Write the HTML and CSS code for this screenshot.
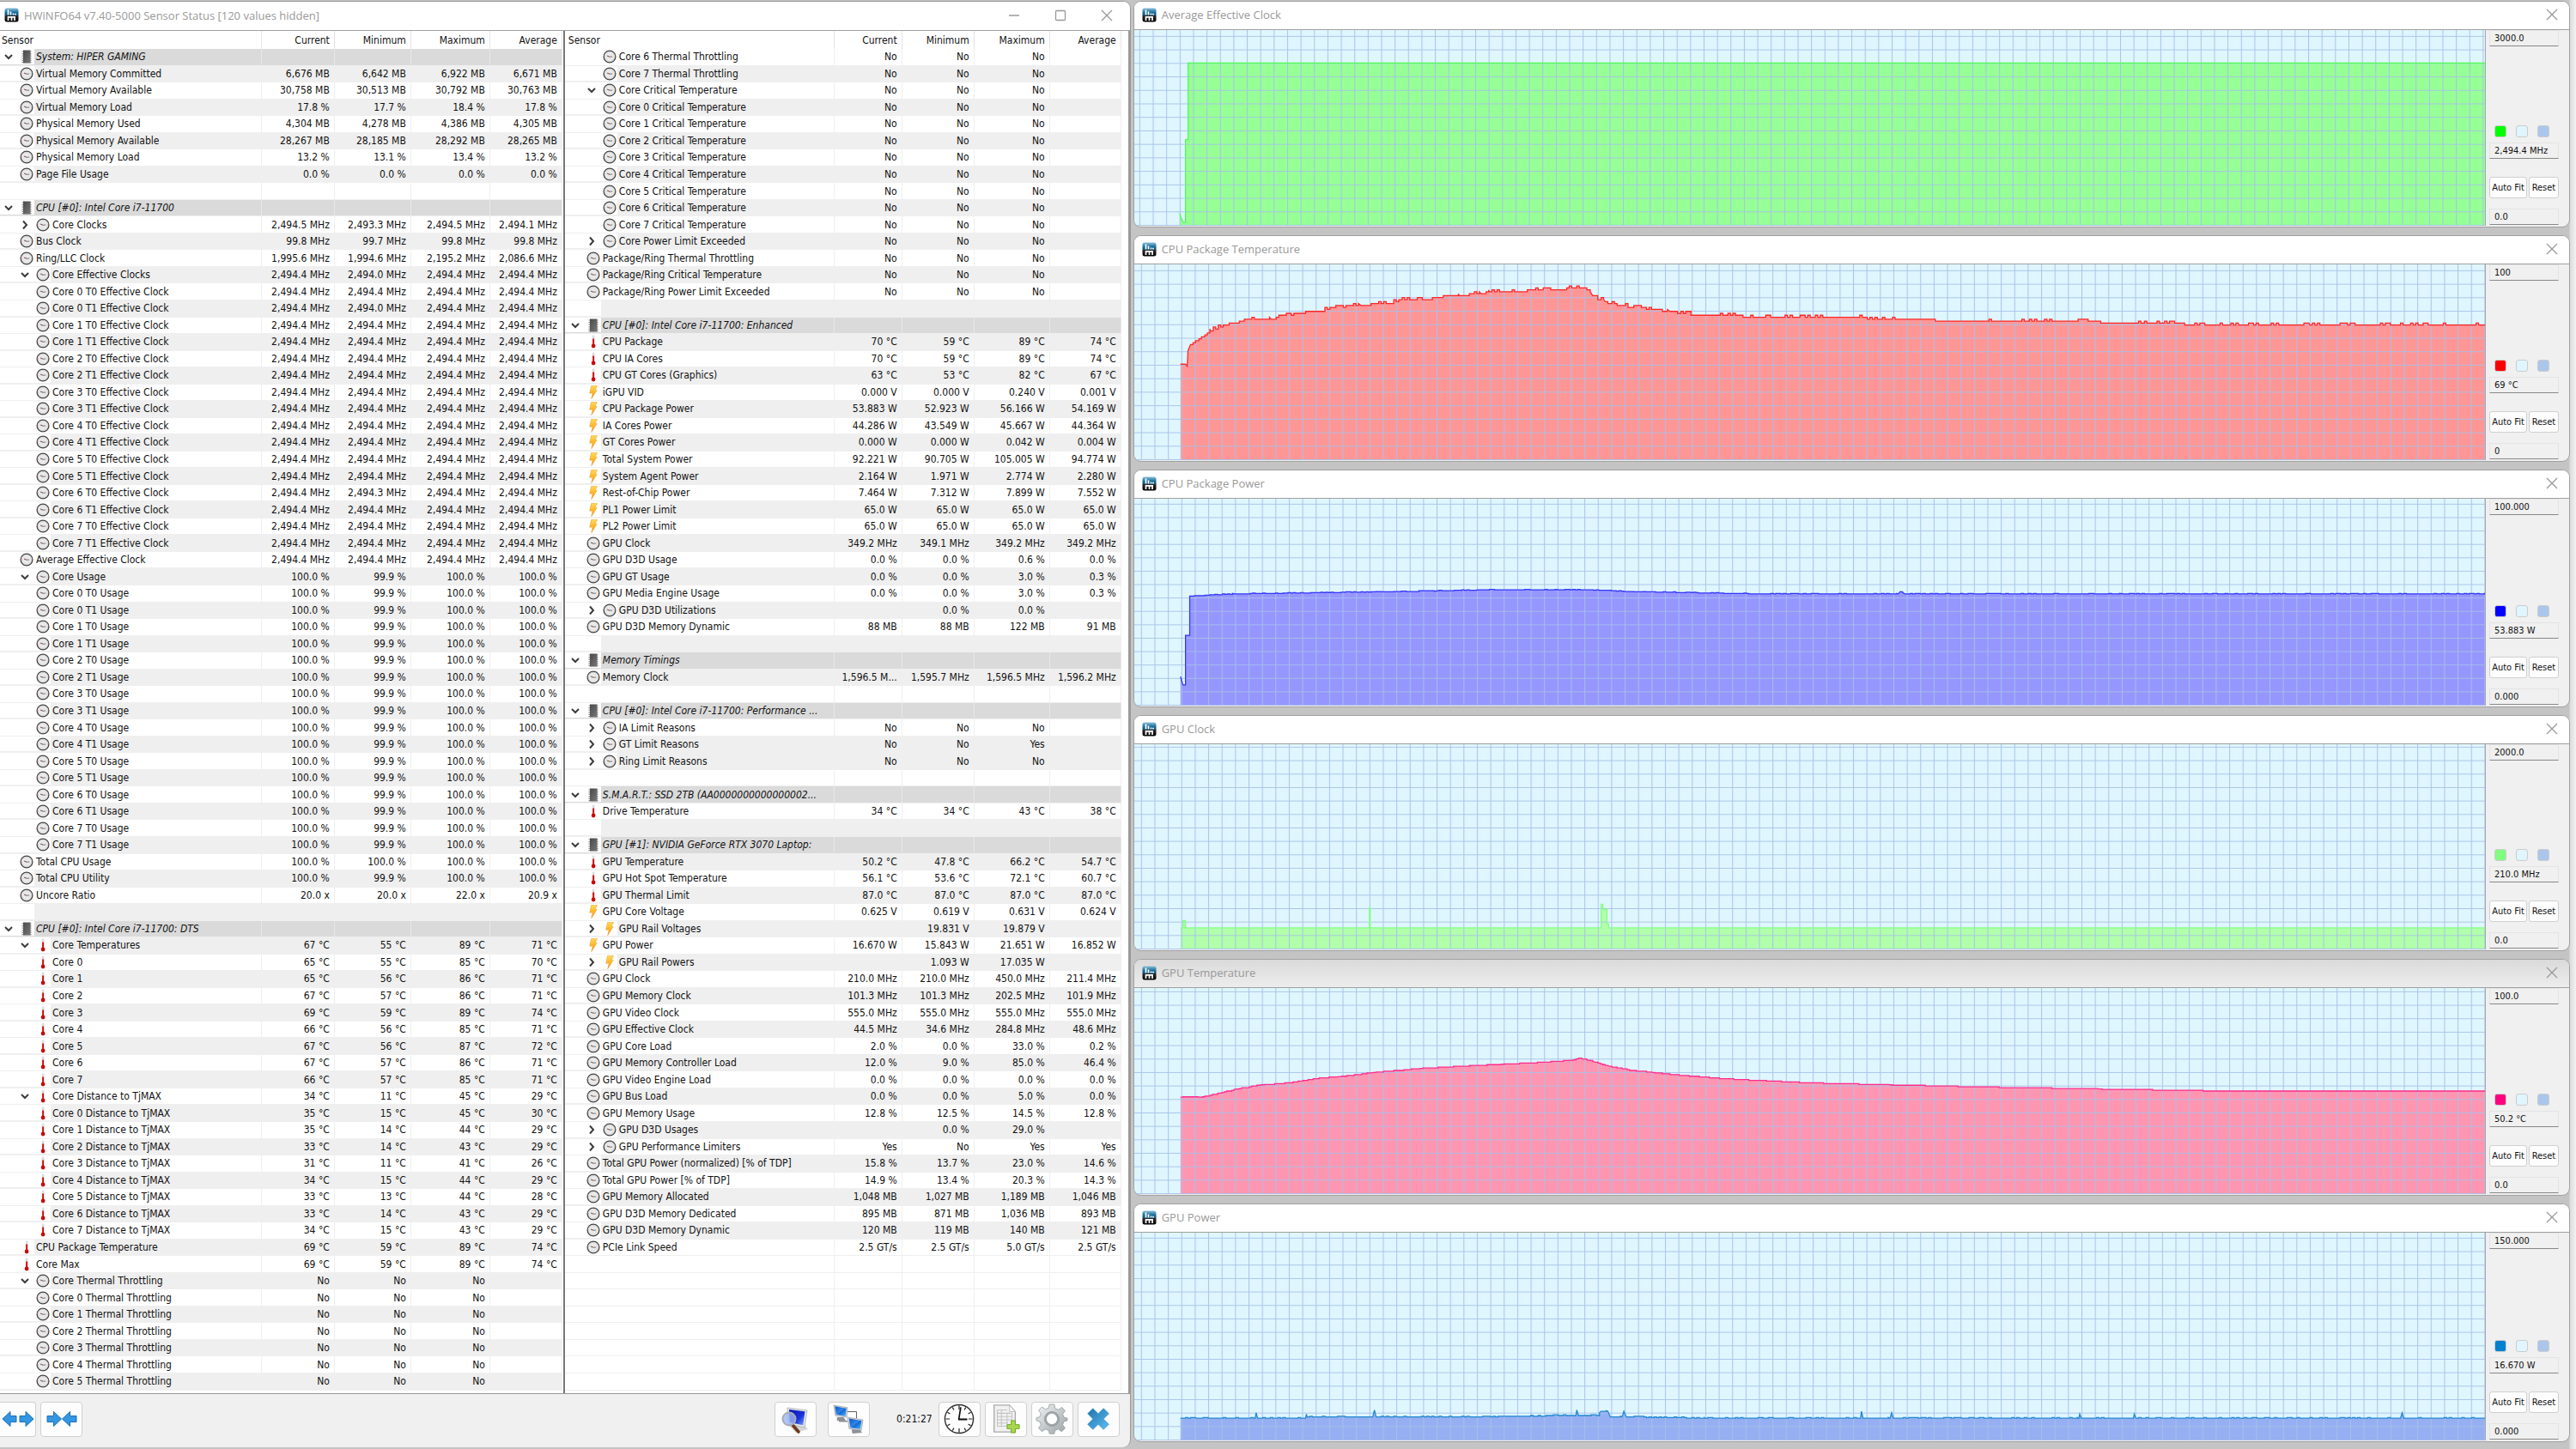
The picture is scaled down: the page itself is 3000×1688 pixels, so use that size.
FILE: index.html
```html
<!DOCTYPE html>
<html lang="en">
<head>
<meta charset="utf-8">
<title>HWiNFO64 Sensor Status</title>
<link rel="stylesheet" href="styles.css">
</head>

<body>
<!-- icons -->
<svg class="defs" width="0" height="0" aria-hidden="true">
	<defs>
		<linearGradient id="gLogo" x1="0" y1="0" x2="0" y2="1"><stop offset="0" stop-color="#8cc0da"/><stop offset=".3" stop-color="#1c6f9c"/><stop offset=".52" stop-color="#0f5077"/><stop offset=".53" stop-color="#2a2a2a"/><stop offset="1" stop-color="#000"/></linearGradient>
		<linearGradient id="gBolt" x1="0" y1="0" x2="0" y2="1"><stop offset="0" stop-color="#ffdc5a"/><stop offset=".6" stop-color="#ffb020"/><stop offset="1" stop-color="#f08020"/></linearGradient>
		<linearGradient id="gChip" x1="0" y1="0" x2="1" y2="1"><stop offset="0" stop-color="#4a4a4a"/><stop offset="1" stop-color="#777"/></linearGradient>
		<linearGradient id="gBlue" x1="0" y1="0" x2="1" y2="1"><stop offset="0" stop-color="#1550c8"/><stop offset=".5" stop-color="#2a8be8"/><stop offset=".55" stop-color="#1565d0"/><stop offset="1" stop-color="#4ab8ff"/></linearGradient>
		<linearGradient id="gDeep" x1="0" y1="0" x2="1" y2="1"><stop offset="0" stop-color="#0a12b0"/><stop offset=".6" stop-color="#1a34dc"/><stop offset="1" stop-color="#7fa6f8"/></linearGradient>
		<linearGradient id="gX" x1="0" y1="0" x2="1" y2="1"><stop offset="0" stop-color="#1f6fa8"/><stop offset="1" stop-color="#5cc0f5"/></linearGradient>
		<linearGradient id="gGear" x1="0" y1="0" x2="1" y2="1"><stop offset="0" stop-color="#f2f4f4"/><stop offset="1" stop-color="#9aa2a4"/></linearGradient>
	</defs>
	<symbol id="logo" viewBox="0 0 17 17">
		<rect x=".5" y=".5" width="16" height="16" rx="2.5" fill="url(#gLogo)"/>
		<path d="M4.5 2.5v6M7.5 4.5v4M10.5 6.5v2M13 6.8v1.7M4.5 10v5M8.5 10v5M12 10v5M4 10.8h9" stroke="#fff" stroke-width="1.7" fill="none"/>
	</symbol>
	<symbol id="gauge" viewBox="0 0 16 16">
		<circle cx="8" cy="8" r="6.9" fill="#e9e9e9" stroke="#454545" stroke-width="1.3"/>
		<circle cx="8" cy="8" r="5.6" fill="none" stroke="#cfcfcf" stroke-width=".8"/>
		<path d="M5 7l3.2 1.3" stroke="#8a5a50" stroke-width="1.2"/><path d="M8.2 8.3l3-.3" stroke="#777" stroke-width="1"/>
	</symbol>
	<symbol id="chip" viewBox="0 0 16 16">
		<path d="M2.5 2h11M2.5 4.6h11M2.5 7.2h11M2.5 9.8h11M2.5 12.4h11M2.5 14.6h11" stroke="#888" stroke-width="1.2"/>
		<rect x="4" y=".5" width="8.500" height="15" fill="url(#gChip)"/>
	</symbol>
	<symbol id="temp" viewBox="0 0 16 16">
		<rect x="6.700" y=".5" width="2.800" height="11" rx="1.400" fill="#dcdcdc"/>
		<path d="M8.100 4.500v8" stroke="#d00d0d" stroke-width="1.900"/>
		<circle cx="8.100" cy="13" r="2.400" fill="#cc0808"/>
	</symbol>
	<symbol id="bolt" viewBox="0 0 16 16">
		<path d="M5.500.5l7-.3-2.300 5 2 .3-6.500 10.300 1.500-6.800-3.500.2z" fill="url(#gBolt)" stroke="#e39a2a" stroke-width=".5"/>
	</symbol>
	<symbol id="open" viewBox="0 0 12 12"><path d="M2 4l4 4 4-4" fill="none" stroke="#3c3c3c" stroke-width="2"/></symbol>
	<symbol id="shut" viewBox="0 0 12 12"><path d="M4 1.500l4 4.500-4 4.500" fill="none" stroke="#3c3c3c" stroke-width="2"/></symbol>
	<symbol id="close" viewBox="0 0 14 14"><path d="M1 1l12 12M13 1L1 13" stroke="#999" stroke-width="1.300" fill="none"/></symbol>
	<symbol id="wide" viewBox="0 0 38 20">
		<path d="M1 10l9-8.500v5h7v7h-7v5z" fill="#3496e0" stroke="#1a6fb8"/><path d="M37 10l-9-8.500v5h-7v7h7v5z" fill="#3496e0" stroke="#1a6fb8"/>
	</symbol>
	<symbol id="narrow" viewBox="0 0 38 20">
		<path d="M18.500 10l-9-8.500v5h-7.500v7h7.500v5z" fill="#3496e0" stroke="#1a6fb8"/><path d="M19.500 10l9-8.500v5h7.500v7h-7.500v5z" fill="#3496e0" stroke="#1a6fb8"/>
	</symbol>
	<symbol id="search" viewBox="0 0 36 36">
		<path d="M10 25l18-1 5 6-14 4z" fill="#d3d6da"/>
		<path d="M9 5l23 3-3 20-19-4z" fill="#e4e6ea" stroke="#a7abb3" stroke-width=".8"/>
		<path d="M11 7l18.500 2.300-2.300 16-15.700-3.300z" fill="url(#gDeep)"/>
		<path d="M15 25l7 8" stroke="#6e3a14" stroke-width="3.600" stroke-linecap="round"/>
		<circle cx="11" cy="18" r="7.500" fill="#9fb8f2" fill-opacity=".8" stroke="#a8adb8" stroke-width="2"/>
	</symbol>
	<symbol id="net" viewBox="0 0 38 38">
		<path d="M18 10h11v8M18 22H8v-5" fill="none" stroke="#555" stroke-width="1"/>
		<path d="M5 17l8 0 3 4-11 0z" fill="#8d9298"/><path d="M1 2l17 3-1 12-14-2z" fill="#cfd4d9" stroke="#8b9096" stroke-width=".6"/><path d="M2.500 3.500l14 2.500-1 9.500-11.500-2z" fill="url(#gBlue)"/>
		<path d="M23 32l10 0 3 4-12 1z" fill="#8d9298"/><path d="M18 17l19 3-2 13-15-2z" fill="#cfd4d9" stroke="#8b9096" stroke-width=".6"/><path d="M20 18.600l15.300 2.400-1.700 10.300-12.200-1.800z" fill="url(#gBlue)"/>
	</symbol>
	<symbol id="clock" viewBox="0 0 38 38">
		<circle cx="19" cy="19" r="17.500" fill="#fff" stroke="#333" stroke-width="1.500"/>
		<path d="M19 2.500v5M19 30.500v5M2.500 19h5M30.500 19h5M10.800 4.700l1.800 3.100M25.400 30.200l1.800 3.100M4.700 10.800l3.100 1.800M30.200 25.400l3.100 1.800M4.700 27.200l3.100-1.800M30.200 12.600l3.100-1.800M10.800 33.300l1.800-3.100M25.400 7.800l1.800-3.100" stroke="#222" stroke-width="1.300"/>
		<path d="M18.500 20L21 4.500" stroke="#111" stroke-width="1.800"/><path d="M18 19.500h11" stroke="#111" stroke-width="2.200"/>
	</symbol>
	<symbol id="sheet" viewBox="0 0 36 38">
		<path d="M4 2h19l7 8v25H4z" fill="#f1f1f1" stroke="#aaa" stroke-width="1.400"/><path d="M23 2v8h7z" fill="#fff" stroke="#bbb"/>
		<path d="M8 8h12M8 12h18M8 16h18M8 20h18M8 24h13M8 28h13M8 8v20M13 8v20M20 12v16M26 12v8" stroke="#c4c4c4" stroke-width="1.100" fill="none"/>
		<path d="M25 21h5v5h5v5h-5v5h-5v-5h-5v-5h5z" fill="#a9d84f" stroke="#6da424"/>
	</symbol>
	<symbol id="gear" viewBox="0 0 38 38">
		<g fill="url(#gGear)" stroke="#90989a" stroke-width=".8">
			<path d="M16 1h6l1 5 4 1.700 4.300-3 4 4.200-3 4.200 1.700 4 4 .9v3l-4 1-1.700 4 3 4.300-4.200 4.200-4.200-3-4 1.700-1 4h-5.800l-1-4-4-1.700-4.300 3-4.200-4.200 3-4.300-1.700-4L0 21v-3.500l4-.9 1.700-4-3-4.200 4.200-4.200 4.200 3 4-1.700z"/>
			<circle cx="19" cy="19" r="9" fill="#9fa6a8"/>
		</g>
		<circle cx="19" cy="19" r="6.500" fill="#fff"/>
	</symbol>
	<symbol id="cross" viewBox="0 0 38 38"><path d="M6 12.500L12.500 6 19 12.500 25.500 6 32 12.500 25.500 19 32 25.500 25.500 32 19 25.500 12.500 32 6 25.500 12.500 19z" fill="url(#gX)" stroke="#3d94ca" stroke-width=".8"/></symbol>
</svg>

<div class="desktop">
	<main class="win sensors">
		<header class="title">
			<svg class="logo"><use href="#logo"/></svg>
			<h1>HWiNFO64 v7.40-5000 Sensor Status [120 values hidden]</h1>
			<button class="sys" aria-label="Minimize"><svg viewBox="0 0 14 14"><path d="M1 7h12" stroke="#999" stroke-width="1.300"/></svg></button>
			<button class="sys" aria-label="Maximize"><svg viewBox="0 0 14 14"><rect x="1.500" y="1.500" width="11" height="11" rx="1" fill="none" stroke="#999" stroke-width="1.300"/></svg></button>
			<button class="sys" aria-label="Close"><svg><use href="#close"/></svg></button>
		</header>
		<div class="panes">
			<div class="pane first"><table id="left"></table></div>
			<div class="pane second"><table id="right"></table></div>
		</div>
		<footer class="bar">
			<button class="tool half" aria-label="Expand columns"><svg><use href="#wide"/></svg></button>
			<button class="tool" aria-label="Shrink columns"><svg><use href="#narrow"/></svg></button>
			<span class="space"></span>
			<button class="tool far" aria-label="Summary"><svg><use href="#search"/></svg></button>
			<button class="tool" aria-label="Remote"><svg><use href="#net"/></svg></button>
			<span class="uptime">0:21:27</span>
			<button class="tool" aria-label="Reset clock"><svg><use href="#clock"/></svg></button>
			<button class="tool" aria-label="Log to file"><svg><use href="#sheet"/></svg></button>
			<button class="tool" aria-label="Settings"><svg><use href="#gear"/></svg></button>
			<button class="tool" aria-label="Close sensors"><svg><use href="#cross"/></svg></button>
		</footer>
	</main>
	<div class="graphs" id="graphs"></div>
</div>

<script src="sensors.js"></script>
</body>
</html>
```
FILE: styles.css
```css
* { box-sizing: border-box; }
body { margin: 0; background: #c4c4c4; font: 12px "DejaVu Sans Condensed", "DejaVu Sans", sans-serif; color: #111; }
button, input { font: inherit; color: inherit; margin: 0; padding: 0; }
.defs { position: absolute; }

.desktop { display: grid; grid-template-columns: 659fr 841fr; gap: 3px; height: 100vh; min-height: 1600px; background: linear-gradient(to left, #f2f2f2, #dcdcdc 7px, #c4c4c4 8px); }
.win { display: flex; flex-direction: column; min-width: 0; min-height: 0; overflow: hidden; background: #f0f0f0; }
.title { flex: none; display: flex; align-items: center; height: 34px; padding-bottom: 2px; background: #fff; border-bottom: 1px solid #a0a0a0; }
.title h1, .title h2 { flex: 1; margin: 0; font: 13px "Open Sans", sans-serif; color: #999; white-space: nowrap; }
.logo { width: 17px; height: 17px; margin-right: 6px; }
.sys { width: 54px; height: 30px; border: 0; background: none; }
.sys svg { display: block; width: 14px; height: 14px; margin: auto; }

/* sensor window */
.sensors { margin: 1px 0 2px; border: solid #999; border-width: 1px 1px 0 0; border-radius: 0 9px 9px 0; }
.sensors .title { padding-left: 5px; }
.panes { flex: 1; display: flex; min-height: 0; background: #fff; border: solid #999; border-width: 0 2px 1px 0; }
.pane { flex: 1; min-width: 0; }
.second { border-left: 2px solid #777; }
table { width: 100%; height: calc(100% - 3px); border-spacing: 0; table-layout: fixed; }
thead tr { height: 21px; }
th { font-weight: normal; padding: 0 5px; text-align: right; border-right: 1px solid #e5e5e5; }
th:first-child { text-align: left; padding-left: 2px; }
.second th:first-child { padding-left: 4px; }
.current { width: 85px; }
.min { width: 89px; }
.max { width: 92px; }
.avg { width: 84px; }
.rest { width: 1px; padding: 0; border: 0; }
.second .current { width: 79px; }
.second .min { width: 84px; }
.second .max { width: 88px; }
.second .avg { width: 83px; }
.second .rest { width: 8px; }
td { padding: 0 5px 0 0; line-height: 18px; text-align: right; white-space: nowrap; border: solid #efefef; border-width: 0 1px 1px 0; }
td.name { text-align: left; padding: 0; --tree: 40px; background: linear-gradient(#fff, #fff) 0 0 / var(--tree) calc(100% - 1px) no-repeat; }
.second td.name { --tree: 42px; }
td.deep { --tree: 59px; }
.second td.deep { --tree: 61px; }
td.name.deep { --tree: 59px; }
.second td.name.deep { --tree: 61px; }
td.rest { background: #fff; padding: 0; border-right: 0; }
.gray { background: #efefef; }
.gray td { border-color: #efefef; }
.group { background: #dadada; font-style: italic; }
.group td { border-right-color: #e8e8e8; }
.node { display: flex; align-items: center; height: 18px; }
.tree { flex: none; display: flex; justify-content: flex-end; align-items: center; width: var(--tree); height: 18px; padding-right: 1px; }
.tree .arrow { width: 12px; height: 12px; margin-right: 7px; }
.tree .icon { width: 16px; height: 16px; }
.label { padding-left: 2px; }

.bar { flex: none; display: flex; align-items: center; gap: 5px; height: 62px; padding: 0 12px 4px 0; }
.space { flex: 1; }
.uptime { width: 70px; padding-right: 2px; text-align: right; }
.tool { width: 49px; height: 41px; background: #fdfdfd; border: 1px solid #d0d0d0; border-radius: 4px; }
.tool svg { display: block; width: 38px; height: 36px; margin: auto; }
.half { width: 42px; border-left: 0; border-radius: 0 4px 4px 0; }
.far { margin-right: 8px; }

/* graph windows */
.graphs { display: grid; grid-template-rows: 264fr 264fr 277fr 275fr 276fr 278fr; gap: 9px; padding: 1px 7px 8px 0; min-height: 0; }
.graph { border: 1px solid #a0a0a0; border-radius: 9px; }
.graph .title { height: 33px; padding-left: 9px; }
.graph .sys { width: 40px; }
.hover .title { background: linear-gradient(#dadada, #ededed); }
.body { flex: 1; display: flex; min-height: 0; padding-bottom: 1px; }
.plot { flex: 1; min-width: 0; background: #dff6fe; border-right: 1px solid #a8a8a8; }
.plot svg { display: block; width: 100%; height: 100%; }
.side { flex: none; display: flex; flex-direction: column; width: 97px; padding: 0 12px 1px 4px; font-size: 11px; }
.side input { width: 100%; height: 19px; padding: 0 5px; border: 1px solid #e4e4e4; border-bottom-color: #888; background: #f0f0f0; }
.colors { display: flex; gap: 11px; margin: auto 0 6px 6px; }
.colors button { width: 14px; height: 14px; border: 1px solid #ccc; border-radius: 3px; }
.buttons { display: flex; gap: 2px; margin: 21px 0 12px; }
.buttons button { width: 45px; height: 25px; background: #fdfdfd; border: 1px solid #d0d0d0; border-radius: 3px; white-space: nowrap; }
.buttons .reset { width: 36px; }
.first-color { background: var(--c); }
.bg-color { background: #dff6fe; }
.grid-color { background: #abc6ea; }
```
FILE: sensors.js
```javascript
// row: flags | label | current | minimum | maximum | average
// flags: level (0 group, 1, 2), icon (c gauge, t temperature, b power), v open, > closed, = shifts the stripes
var left=[
	'0v|System: HIPER GAMING',
	'1c|Virtual Memory Committed|6,676 MB|6,642 MB|6,922 MB|6,671 MB',
	'1c|Virtual Memory Available|30,758 MB|30,513 MB|30,792 MB|30,763 MB',
	'1c|Virtual Memory Load|17.8 %|17.7 %|18.4 %|17.8 %',
	'1c|Physical Memory Used|4,304 MB|4,278 MB|4,386 MB|4,305 MB',
	'1c|Physical Memory Available|28,267 MB|28,185 MB|28,292 MB|28,265 MB',
	'1c|Physical Memory Load|13.2 %|13.1 %|13.4 %|13.2 %',
	'1c|Page File Usage|0.0 %|0.0 %|0.0 %|0.0 %',
	'',
	'0v|CPU [#0]: Intel Core i7-11700',
	'2c>|Core Clocks|2,494.5 MHz|2,493.3 MHz|2,494.5 MHz|2,494.1 MHz',
	'1c|Bus Clock|99.8 MHz|99.7 MHz|99.8 MHz|99.8 MHz',
	'1c|Ring/LLC Clock|1,995.6 MHz|1,994.6 MHz|2,195.2 MHz|2,086.6 MHz',
	'2cv|Core Effective Clocks|2,494.4 MHz|2,494.0 MHz|2,494.4 MHz|2,494.4 MHz'
];
var lows={1:'2,494.0', 12:'2,494.3'};
var i=0;
for(i=0;i<16;i++)
{
	left.push('2c|Core '+(i>>1)+' T'+i%2+' Effective Clock|2,494.4 MHz|'+(lows[i]||'2,494.4')+' MHz|2,494.4 MHz|2,494.4 MHz');
}
left.push('1c|Average Effective Clock|2,494.4 MHz|2,494.4 MHz|2,494.4 MHz|2,494.4 MHz');
left.push('2cv|Core Usage|100.0 %|99.9 %|100.0 %|100.0 %');
for(i=0;i<16;i++)
{
	left.push('2c|Core '+(i>>1)+' T'+i%2+' Usage|100.0 %|99.9 %|100.0 %|100.0 %');
}
left.push(
	'1c|Total CPU Usage|100.0 %|100.0 %|100.0 %|100.0 %',
	'1c|Total CPU Utility|100.0 %|99.9 %|100.0 %|100.0 %',
	'1c|Uncore Ratio|20.0 x|20.0 x|22.0 x|20.9 x',
	'',
	'0v|CPU [#0]: Intel Core i7-11700: DTS'
);
function celsius(flags,label,values)
{
	left.push(flags+'|'+label+'|'+values.split(' ').map(function(v){ return v+' °C'; }).join('|'));
}
celsius('2tv','Core Temperatures','67 55 89 71');
['65 55 85 70','65 56 86 71','67 57 86 71','69 59 89 74','66 56 85 71','67 56 87 72','67 57 86 71','66 57 85 71'].forEach(function(v,n){ celsius('2t','Core '+n,v); });
celsius('2tv','Core Distance to TjMAX','34 11 45 29');
['35 15 45 30','35 14 44 29','33 14 43 29','31 11 41 26','34 15 44 29','33 13 44 28','33 14 43 29','34 15 43 29'].forEach(function(v,n){ celsius('2t','Core '+n+' Distance to TjMAX',v); });
celsius('1t','CPU Package Temperature','69 59 89 74');
celsius('1t','Core Max','69 59 89 74');
left.push('2cv|Core Thermal Throttling|No|No|No');
for(i=0;i<6;i++)
{
	left.push('2c|Core '+i+' Thermal Throttling|No|No|No');
}

var right=[
	'2c|Core 6 Thermal Throttling|No|No|No',
	'2c|Core 7 Thermal Throttling|No|No|No',
	'2cv|Core Critical Temperature|No|No|No'
];
for(i=0;i<8;i++)
{
	right.push('2c|Core '+i+' Critical Temperature|No|No|No');
}
right.push(
	'2c>|Core Power Limit Exceeded|No|No|No',
	'1c|Package/Ring Thermal Throttling|No|No|No',
	'1c|Package/Ring Critical Temperature|No|No|No',
	'1c|Package/Ring Power Limit Exceeded|No|No|No',
	'',
	'0v|CPU [#0]: Intel Core i7-11700: Enhanced',
	'1t|CPU Package|70 °C|59 °C|89 °C|74 °C',
	'1t|CPU IA Cores|70 °C|59 °C|89 °C|74 °C',
	'1t|CPU GT Cores (Graphics)|63 °C|53 °C|82 °C|67 °C',
	'1b|iGPU VID|0.000 V|0.000 V|0.240 V|0.001 V',
	'1b|CPU Package Power|53.883 W|52.923 W|56.166 W|54.169 W',
	'1b|IA Cores Power|44.286 W|43.549 W|45.667 W|44.364 W',
	'1b|GT Cores Power|0.000 W|0.000 W|0.042 W|0.004 W',
	'1b|Total System Power|92.221 W|90.705 W|105.005 W|94.774 W',
	'1b|System Agent Power|2.164 W|1.971 W|2.774 W|2.280 W',
	'1b|Rest-of-Chip Power|7.464 W|7.312 W|7.899 W|7.552 W',
	'1b|PL1 Power Limit|65.0 W|65.0 W|65.0 W|65.0 W',
	'1b|PL2 Power Limit|65.0 W|65.0 W|65.0 W|65.0 W',
	'1c|GPU Clock|349.2 MHz|349.1 MHz|349.2 MHz|349.2 MHz',
	'1c|GPU D3D Usage|0.0 %|0.0 %|0.6 %|0.0 %',
	'1c|GPU GT Usage|0.0 %|0.0 %|3.0 %|0.3 %',
	'1c|GPU Media Engine Usage|0.0 %|0.0 %|3.0 %|0.3 %',
	'2c>|GPU D3D Utilizations||0.0 %|0.0 %',
	'1c|GPU D3D Memory Dynamic|88 MB|88 MB|122 MB|91 MB',
	'',
	'0v|Memory Timings',
	'1c|Memory Clock|1,596.5 M...|1,595.7 MHz|1,596.5 MHz|1,596.2 MHz',
	'',
	'0v|CPU [#0]: Intel Core i7-11700: Performance ...',
	'2c>|IA Limit Reasons|No|No|No',
	'2c>|GT Limit Reasons|No|No|Yes',
	'2c>=|Ring Limit Reasons|No|No|No',
	'',
	'0v|S.M.A.R.T.: SSD 2TB (AA0000000000000002...',
	'1t|Drive Temperature|34 °C|34 °C|43 °C|38 °C',
	'',
	'0v|GPU [#1]: NVIDIA GeForce RTX 3070 Laptop:',
	'1t|GPU Temperature|50.2 °C|47.8 °C|66.2 °C|54.7 °C',
	'1t|GPU Hot Spot Temperature|56.1 °C|53.6 °C|72.1 °C|60.7 °C',
	'1t|GPU Thermal Limit|87.0 °C|87.0 °C|87.0 °C|87.0 °C',
	'1b|GPU Core Voltage|0.625 V|0.619 V|0.631 V|0.624 V',
	'2b>|GPU Rail Voltages||19.831 V|19.879 V',
	'1b|GPU Power|16.670 W|15.843 W|21.651 W|16.852 W',
	'2b>|GPU Rail Powers||1.093 W|17.035 W',
	'1c|GPU Clock|210.0 MHz|210.0 MHz|450.0 MHz|211.4 MHz',
	'1c|GPU Memory Clock|101.3 MHz|101.3 MHz|202.5 MHz|101.9 MHz',
	'1c|GPU Video Clock|555.0 MHz|555.0 MHz|555.0 MHz|555.0 MHz',
	'1c|GPU Effective Clock|44.5 MHz|34.6 MHz|284.8 MHz|48.6 MHz',
	'1c|GPU Core Load|2.0 %|0.0 %|33.0 %|0.2 %',
	'1c|GPU Memory Controller Load|12.0 %|9.0 %|85.0 %|46.4 %',
	'1c|GPU Video Engine Load|0.0 %|0.0 %|0.0 %|0.0 %',
	'1c|GPU Bus Load|0.0 %|0.0 %|5.0 %|0.0 %',
	'1c|GPU Memory Usage|12.8 %|12.5 %|14.5 %|12.8 %',
	'2c>|GPU D3D Usages||0.0 %|29.0 %',
	'2c>|GPU Performance Limiters|Yes|No|Yes|Yes',
	'1c|Total GPU Power (normalized) [% of TDP]|15.8 %|13.7 %|23.0 %|14.6 %',
	'1c|Total GPU Power [% of TDP]|14.9 %|13.4 %|20.3 %|14.3 %',
	'1c|GPU Memory Allocated|1,048 MB|1,027 MB|1,189 MB|1,046 MB',
	'1c|GPU D3D Memory Dedicated|895 MB|871 MB|1,036 MB|893 MB',
	'1c|GPU D3D Memory Dynamic|120 MB|119 MB|140 MB|121 MB',
	'1c|PCIe Link Speed|2.5 GT/s|2.5 GT/s|5.0 GT/s|2.5 GT/s'
);

function use(cls,id)
{
	return '<svg class="'+cls+'"><use href="#'+id+'"/></svg>';
}

function fillTable(id,rows)
{
	var icons={c:'gauge', t:'temp', b:'bolt'};
	var last=rows.length;
	var shift=0;
	var html='<thead><tr><th>Sensor</th><th class="current">Current</th><th class="min">Minimum</th><th class="max">Maximum</th><th class="avg">Average</th><th class="rest"></th></tr></thead><tbody>';
	for(var r=0;r<80;r++)
	{
		var p=(rows[r]||'').split('|');
		var f=p[0];
		if(f.indexOf('=')>0) shift=1;
		var cls=f.charAt(0)=='0' ? 'group' : (r<last && (r+shift)%2 ? 'gray' : '');
		var arrow=f.indexOf('v')>0 ? use('arrow','open') : f.indexOf('>')>0 ? use('arrow','shut') : '';
		html+='<tr class="'+cls+'"><td class="name'+(f.charAt(0)=='2'?' deep':'')+'"><div class="node">';
		if(f) html+='<span class="tree">'+arrow+use('icon',f.charAt(0)=='0'?'chip':icons[f.charAt(1)])+'</span><span class="label">'+p[1]+'</span>';
		html+='</div></td>';
		for(var c=2;c<6;c++) html+='<td>'+(p[c]||'')+'</td>';
		html+='<td class="rest"></td></tr>';
	}
	document.getElementById(id).innerHTML=html+'</tbody>';
}
fillTable('left',left);
fillTable('right',right);

// graphs: points are [x, value] on a 1609 wide plot, 16 to a grid cell
var graphs=[
	{name:'Average Effective Clock', top:'3000.0', low:'0.0', now:'2,494.4 MHz', max:3000, h:232, line:'#4dff4d', fill:'#96ff96', color:'#00ff00', off:6, step:1,
		points:[[54,190],[57,80],[59,50],[61,50],[61,1320],[64,1320],[64,2494],[1609,2494]]},
	{name:'CPU Package Temperature', top:'100', low:'0', now:'69 °C', max:100, h:232, line:'#ff2626', fill:'#ff9696', color:'#ff0000', step:1, noise:1,
		points:[[55,49],[63,48],[64,56],[67,59],[74,61],[81,63],[91,66],[107,69],[122,70],[134,72],[163,72],[178,74],[198,75],[206,76],[224,76],[234,78],[270,79],[306,80],[316,82],[352,82],[359,83],[387,84],[413,85],[423,86],[459,86],[475,87],[503,87],[533,88],[540,87],[546,84],[553,82],[561,81],[566,80],[582,79],[592,78],[617,77],[638,76],[648,75],[674,74],[760,73],[840,73],[900,72],[1000,71],[1100,71],[1200,70],[1300,69],[1400,69],[1609,69]]},
	{name:'CPU Package Power', top:'100.000', low:'0.000', now:'53.883 W', max:100, h:247, line:'#3434ff', fill:'#9696ff', color:'#0000ff', step:.2, noise:.2,
		points:[[55,14],[58,10],[61,10],[61,34],[66,34],[66,53],[120,54],[300,55],[420,56],[538,56],[600,55],[740,54],[910,54],[912,55],[918,54],[1609,54]]},
	{name:'GPU Clock', top:'2000.0', low:'0.0', now:'210.0 MHz', max:2000, h:244, line:'#85ff85', fill:'#b1ffab', color:'#80ff80', step:1,
		points:[[55,210],[58,210],[58,281],[61,281],[61,210],[280,210],[280,410],[281,410],[281,210],[556,210],[556,441],[558,441],[558,390],[563,390],[563,245],[565,245],[565,210],[1609,210]]},
	{name:'GPU Temperature', top:'100.0', low:'0.0', now:'50.2 °C', max:100, h:245, line:'#ff2a8c', fill:'#ff96b1', color:'#ff0080', step:.4, hover:1,
		points:[[55,47],[78,47],[101,49],[122,51],[152,53],[183,54],[214,56],[244,57],[285,59],[341,61],[387,62],[438,63],[490,64],[520,65],[530,66],[540,65],[549,64],[566,62],[592,60],[617,59],[643,58],[702,56],[800,54],[900,53],[1000,52],[1150,51],[1300,50],[1609,50]]},
	{name:'GPU Power', top:'150.000', low:'0.000', now:'16.670 W', max:150, h:247, line:'#2088d0', fill:'#96aff2', color:'#0080d0', step:.5, noise:.5,
		points:[[55,16],[144,16],[145,20],[147,16],[204,16],[205,19],[206,17],[284,17],[286,22],[288,17],[400,17],[526,18],[527,22],[529,18],[551,18],[556,21],[564,21],[567,17],[581,17],[583,21],[586,17],[680,16],[865,16],[866,21],[868,16],[900,16],[902,20],[904,16],[1125,16],[1126,19],[1128,16],[1190,16],[1191,19],[1193,16],[1508,16],[1510,20],[1512,16],[1609,16]]}
];

function plot(g,n)
{
	var seed=7+n;
	var k=g.h/g.max;
	var pts=g.points;
	var d='';
	for(var j=0;j<pts.length;j++)
	{
		var a=pts[j];
		var b=pts[j+1];
		d+=(j?'L':'M')+a[0]+' '+(g.h-a[1]*k).toFixed(1);
		// readings come every 3 units, held until the next one
		for(var x=a[0]+3;b && g.step && x<b[0];x+=3)
		{
			seed=(seed*1103515245+12345)%2147483648;
			var v=a[1]+(b[1]-a[1])*(x-a[0])/(b[0]-a[0]);
			if(g.noise && seed/2147483648>.72) v+=g.noise;
			v=Math.round(v/g.step)*g.step;
			d+='H'+x+'V'+(g.h-v*k).toFixed(1);
		}
	}
	var oy=g.h%16;
	return '<svg viewBox="0 0 1609 '+g.h+'" preserveAspectRatio="none" role="img" aria-label="'+g.name+'">'
		+'<pattern id="grid'+n+'" x="'+(g.off||8)+'" y="'+oy+'" width="16" height="16" patternUnits="userSpaceOnUse"><path d="M.5 0V16M0 15.500H16" stroke="#a6c0e8" stroke-width="1.200" fill="none"/></pattern>'
		+'<path d="'+d+'V'+g.h+'H'+pts[0][0]+'z" fill="'+g.fill+'"/>'
		+'<rect width="1609" height="'+g.h+'" fill="url(#grid'+n+')" opacity=".9"/>'
		+'<path d="'+d+'" fill="none" stroke="'+g.line+'" stroke-width="1.300"/></svg>';
}

document.getElementById('graphs').innerHTML=graphs.map(function(g,n)
{
	return '<section class="win graph'+(g.hover?' hover':'')+'">'
		+'<header class="title">'+use('logo','logo')+'<h2>'+g.name+'</h2><button class="sys" aria-label="Close">'+use('','close')+'</button></header>'
		+'<div class="body"><div class="plot">'+plot(g,n)+'</div>'
		+'<div class="side" style="--c:'+g.color+'"><input aria-label="Top value" value="'+g.top+'">'
		+'<div class="colors"><button class="first-color" aria-label="Line color"></button><button class="bg-color" aria-label="Background color"></button><button class="grid-color" aria-label="Grid color"></button></div>'
		+'<input aria-label="Current value" readonly value="'+g.now+'">'
		+'<div class="buttons"><button>Auto Fit</button><button class="reset">Reset</button></div>'
		+'<input aria-label="Bottom value" value="'+g.low+'"></div></div></section>';
}).join('');
```
